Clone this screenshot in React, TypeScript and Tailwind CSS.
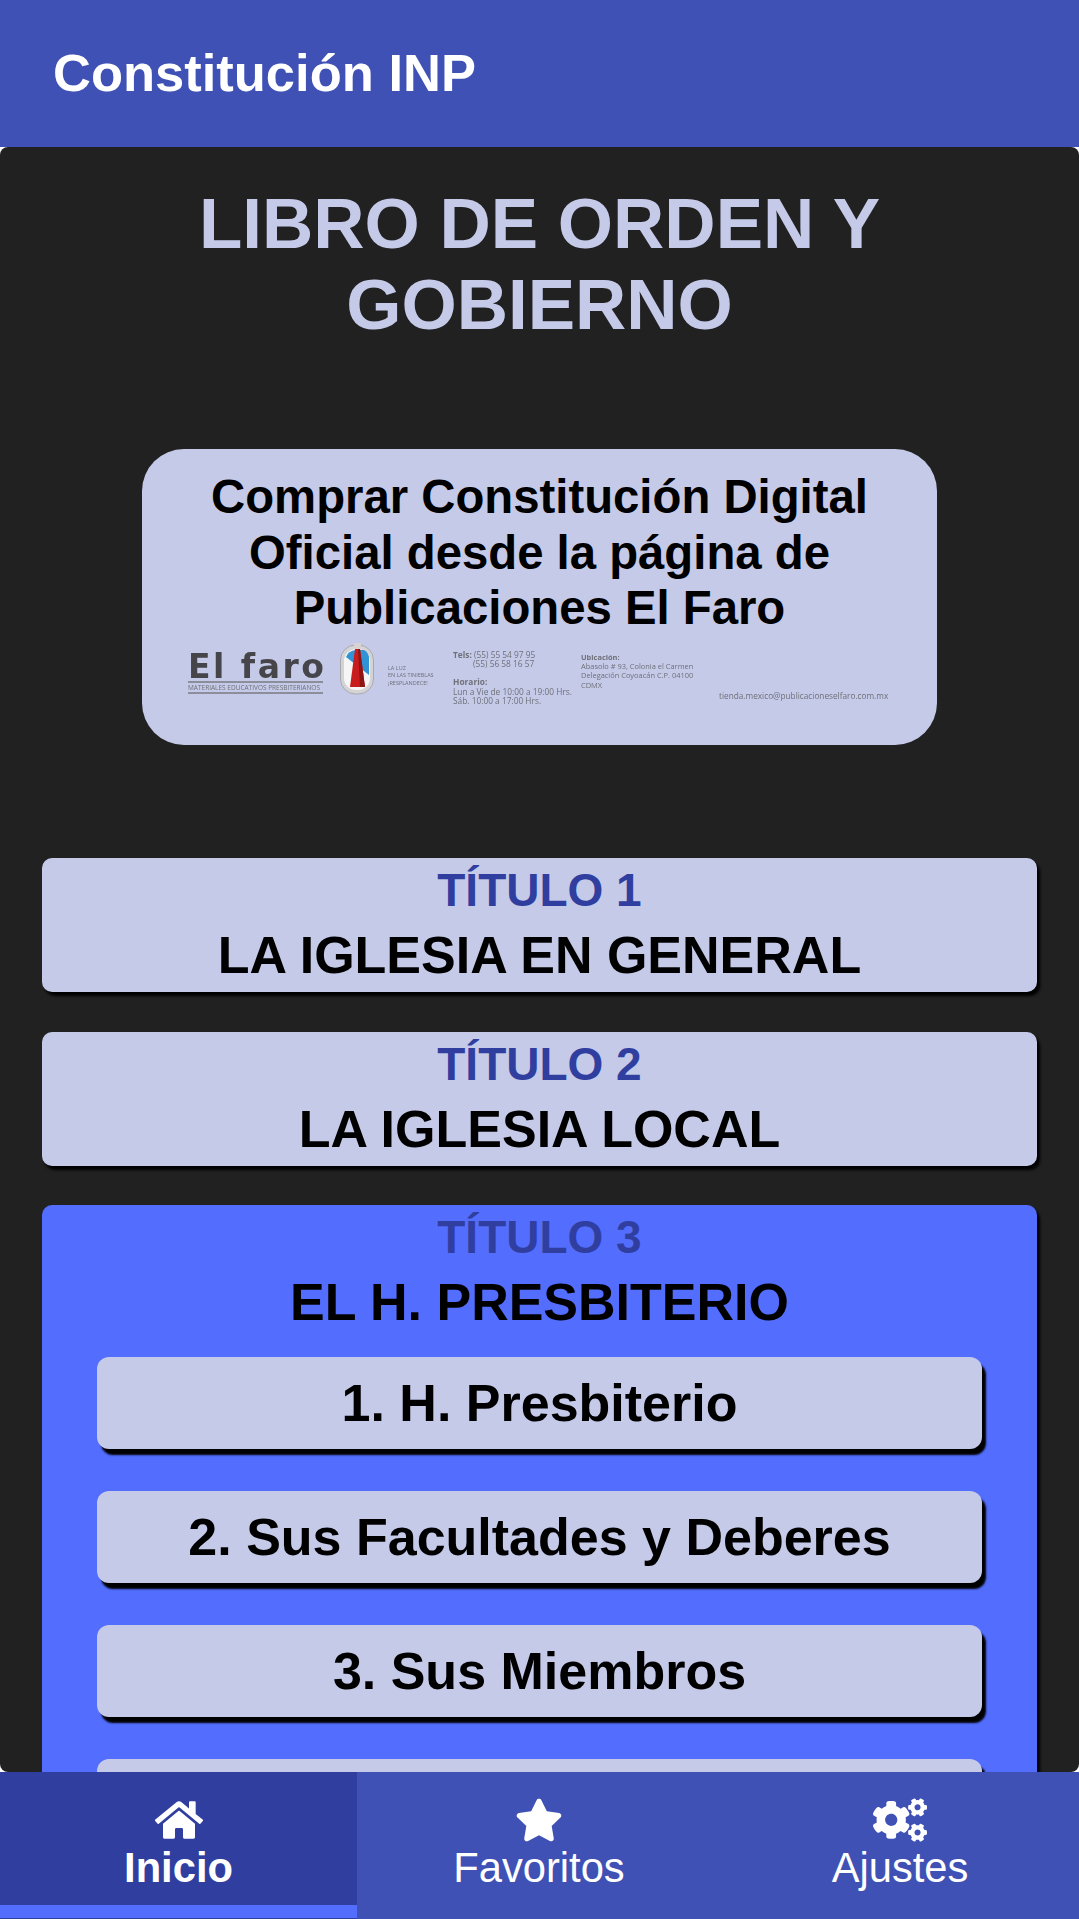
import React from "react";
import { FaHome, FaStar, FaCogs } from "react-icons/fa";

// the 4th row sits under the tab bar, only its top edge shows
const sections = ["1. H. Presbiterio", "2. Sus Facultades y Deberes", "3. Sus Miembros", ""];

function Lighthouse() {
  return (
    <svg width="34" height="52" viewBox="0 0 34 52" className="flex-none">
      <rect x="0.5" y="2" width="33" height="49" rx="15" fill="#d4d4d6" stroke="#a8a8ae" />
      <rect x="4" y="6" width="26" height="41" rx="12" fill="#f6f6f6" />
      <path d="M6 14 Q8 8 16 7 L24 7 Q28 9 29 14 L29 32 Z" fill="#2f93d6" />
      <path d="M15 6 L20 6 L25 44 L10 44 Z" fill="#c91d1d" />
      <path d="M18 6 L20 6 L25 44 L20 44 Z" fill="#8f1414" />
      <rect x="14" y="0" width="7" height="6" rx="1" fill="#d9d2d2" />
    </svg>
  );
}

function StoreBanner() {
  return (
    <div className="flex items-start mt-[15px] ml-[46px] h-[64px] text-[#6f7078] blur-[0.45px] font-['Open_Sans',sans-serif]">
      <div className="w-[140px] flex-none pt-[4px]">
        <div className="text-[33px] leading-[24px] font-bold text-[#45454a] tracking-[2.5px] font-['DejaVu_Sans',sans-serif] whitespace-nowrap">
          El faro
        </div>
        <div className="-mt-[4px] pt-[6px]">
          <div className="border-y-2 border-[#8d8e9c] text-[6.5px] leading-[9px] whitespace-nowrap w-[135px] overflow-hidden">
            MATERIALES EDUCATIVOS PRESBITERIANOS
          </div>
        </div>
      </div>
      <div className="ml-[12px] -mt-[8px]">
        <Lighthouse />
      </div>
      <div className="ml-[14px] mt-[14px] text-[5.5px] leading-[7.5px] w-[65px] flex-none whitespace-nowrap">
        <div>LA LUZ</div>
        <div>EN LAS TINIEBLAS</div>
        <div>¡RESPLANDECE!</div>
      </div>
      <div className="-mt-[1px] text-[8.35px] leading-[9.4px] w-[128px] flex-none whitespace-nowrap">
        <div>
          <b>Tels:</b> (55) 55 54 97 95
        </div>
        <div className="pl-[20px]">(55) 56 58 16 57</div>
        <div className="mt-[9px] font-bold">Horario:</div>
        <div>Lun a Vie de 10:00 a 19:00 Hrs.</div>
        <div>Sáb. 10:00 a 17:00 Hrs.</div>
      </div>
      <div className="pt-[2px] text-[7.45px] leading-[9.4px] w-[138px] flex-none whitespace-nowrap">
        <div className="font-bold">Ubicación:</div>
        <div>Abasolo # 93, Colonia el Carmen</div>
        <div>Delegación Coyoacán C.P. 04100</div>
        <div>CDMX</div>
      </div>
      <div className="pt-[40px] text-[8.25px] leading-[10px] whitespace-nowrap">tienda.mexico@publicacioneselfaro.com.mx</div>
    </div>
  );
}

function TitleCard({ num, name }: { num: string; name: string }) {
  return (
    <div className="h-[134px] rounded-[10px] bg-[#c5cae9] shadow-[3px_4px_3px_#000] text-center font-bold mb-[39.5px]">
      <div className="pt-[5px] text-[46px] leading-[54px] text-[#303f9f]">{num}</div>
      <div className="mt-[8px] text-[52px] leading-[60px] text-black">{name}</div>
    </div>
  );
}

export default function App() {
  return (
    <div className="h-[1919px] w-[1079px] overflow-hidden flex flex-col bg-white font-['Liberation_Sans',Arial,sans-serif]">
      {/* Header */}
      <header className="h-[147px] flex-none bg-[#3f51b5] flex items-center pl-[53px]">
        <span className="text-[52.5px] font-bold text-white">Constitución INP</span>
      </header>

      {/* Content */}
      <main className="flex-1 min-h-0 overflow-hidden rounded-[8px] bg-[#212121] px-[42px] pt-[36px]">
        <h1 className="text-center text-[71px] leading-[81px] font-bold text-[#c5cae9] px-[60px]">
          LIBRO DE ORDEN Y GOBIERNO
        </h1>
        <div className="mt-[104px] mb-[113px] mx-[100px] h-[296px] rounded-[42px] bg-[#c5cae9] pt-[20px]">
          <div className="text-center text-[47.3px] leading-[55.5px] font-bold text-black px-[40px]">
            Comprar Constitución Digital Oficial desde la página de Publicaciones El Faro
          </div>
          <StoreBanner />
        </div>

        <TitleCard num="TÍTULO 1" name="LA IGLESIA EN GENERAL" />
        <TitleCard num="TÍTULO 2" name="LA IGLESIA LOCAL" />

        <div className="rounded-[10px] bg-[#536dfe] shadow-[3px_4px_3px_#000] text-center font-bold pb-[40px]">
          <div className="pt-[5px] text-[46px] leading-[54px] text-[#303f9f]">TÍTULO 3</div>
          <div className="mt-[8px] text-[52px] leading-[60px] text-black">EL H. PRESBITERIO</div>
          <div className="flex flex-col gap-[42px] px-[55px] mt-[25px]">
            {sections.map((s, i) => (
              <div
                key={i}
                className="h-[92px] rounded-[12px] bg-[#c5cae9] shadow-[4px_6px_2px_#000] flex items-center justify-center text-[52px] text-black"
              >
                {s}
              </div>
            ))}
          </div>
        </div>
      </main>

      {/* Bottom tabs */}
      <nav className="h-[147px] flex-none flex bg-[#3f51b5] text-white text-[41.7px] leading-[48px]">
        <div className="w-[357px] bg-[#303f9f] flex flex-col items-center pt-[24px] font-bold relative">
          <FaHome size={48} />
          <span>Inicio</span>
          <div className="absolute left-0 right-0 top-[133px] h-[13px] bg-[#536dfe]" />
        </div>
        <div className="w-[364px] flex flex-col items-center pt-[24px]">
          <FaStar size={48} />
          <span>Favoritos</span>
        </div>
        <div className="flex-1 flex flex-col items-center pt-[24px]">
          <FaCogs size={54} className="-mt-[3px] -mb-[3px]" />
          <span>Ajustes</span>
        </div>
      </nav>
    </div>
  );
}
